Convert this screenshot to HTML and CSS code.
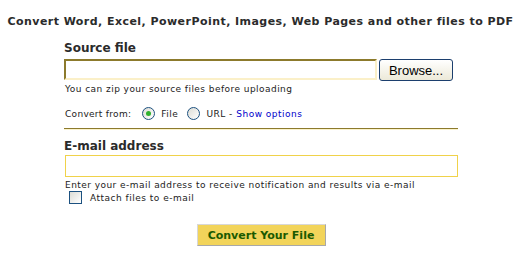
FILE: index.html
```html
<!DOCTYPE html>
<html lang="en">
<head>
    <meta charset="UTF-8">
    <title>Convert to PDF</title>
    <link rel="stylesheet" href="styles.css">
</head>
<body>
    <h1 class="title">Convert Word, Excel, PowerPoint, Images, Web Pages and other files to PDF</h1>
    <form class="convert-form">
        <h2>Source file</h2>
        <div class="file-row">
            <div class="file-box"></div>
            <button type="button" class="browse">Browse...</button>
        </div>
        <p class="hint">You can zip your source files before uploading</p>
        <div class="from-row">
            <span class="from-label">Convert from:</span>
            <span class="radio checked"></span>
            <span class="opt">File</span>
            <span class="radio"></span>
            <span class="opt">URL - <a href="#">Show options</a></span>
        </div>
        <div class="divider"></div>

        <h2>E-mail address</h2>
        <div class="email-box"></div>
        <p class="hint">Enter your e-mail address to receive notification and results via e-mail</p>
        <div class="attach-row">
            <span class="checkbox"></span>
            <span class="opt">Attach files to e-mail</span>
        </div>

        <div class="submit-row">
            <button type="button" class="submit">Convert Your File</button>
        </div>
    </form>
</body>
</html>
```

FILE: styles.css
```css
body {
    margin: 0;
    background-color: #ffffff;
    font-family: 'DejaVu Sans', Verdana, sans-serif;
    color: #333333;
}

.title {
    margin: 0;
    padding-top: 15px;
    font-size: 11px;
    line-height: 13px;
    letter-spacing: 0.45px;
    text-align: center;
    color: #2b2b2b;
}

.convert-form {
    width: 394px;
    margin-left: 64px;
}

.convert-form h2 {
    margin: 0;
    font-size: 12px;
    line-height: 15px;
    color: #2b2b2b;
}

.convert-form h2:first-child {
    margin-top: 13px;
}

.file-row {
    display: flex;
    margin-top: 3px;
}

.file-box {
    width: 309px;
    height: 17px;
    border-style: solid;
    border-width: 2px;
    border-color: #8c7a2c #fbf0c8 #fbf0c8 #8c7a2c;
}

.browse {
    width: 74px;
    height: 22px;
    margin-left: 2px;
    padding: 0;
    font-family: 'Liberation Sans', Arial, sans-serif;
    font-size: 13px;
    color: #000;
    background: linear-gradient(#ffffff, #ece9d8);
    border: 1px solid #1c3f6e;
    border-radius: 3px;
}

.hint {
    margin: 2px 0 0 1px;
    font-size: 9px;
    line-height: 12px;
    letter-spacing: 0.45px;
    color: #222;
}

.from-row {
    display: flex;
    align-items: center;
    margin: 12px 0 0 1px;
    font-size: 9px;
    color: #222;
}

.from-label {
    margin-right: 11px;
    letter-spacing: 0.3px;
}

.opt {
    margin: 0 9px 0 6px;
    letter-spacing: 0.5px;
}

.opt a {
    color: #0000cc;
    text-decoration: none;
}

.radio {
    width: 11px;
    height: 11px;
    border: 1px solid #1c5180;
    border-radius: 50%;
    background: linear-gradient(135deg, #dcdcd5, #ffffff);
    display: flex;
    align-items: center;
    justify-content: center;
}

.radio.checked::after {
    content: "";
    width: 5px;
    height: 5px;
    border-radius: 50%;
    background: #2fb12f;
}

.divider {
    margin-top: 8px;
    height: 1px;
    background: #8c7a2c;
    border-bottom: 1px solid #fbf3cc;
}

.convert-form .divider + h2 {
    margin-top: 9px;
}

.email-box {
    width: 391px;
    height: 20px;
    margin: 1px 0 0 1px;
    border: 1px solid #f0d24a;
}

.attach-row {
    display: flex;
    align-items: center;
    margin: 0 0 0 5px;
    font-size: 9px;
    color: #222;
}

.checkbox {
    width: 11px;
    height: 11px;
    border: 1px solid #1c5180;
    background: linear-gradient(135deg, #dcdcd5, #ffffff);
    margin-right: 2px;
}

.submit-row {
    display: flex;
    justify-content: center;
    margin-top: 20px;
}

.submit {
    width: 129px;
    height: 22px;
    padding: 0;
    font-family: 'DejaVu Sans', Verdana, sans-serif;
    font-size: 11px;
    font-weight: bold;
    color: #1b5a00;
    background-color: #f2d45a;
    border: 1px solid #a8a8a8;
    border-top-color: #d8d8d8;
    border-left-color: #d8d8d8;
}
```
